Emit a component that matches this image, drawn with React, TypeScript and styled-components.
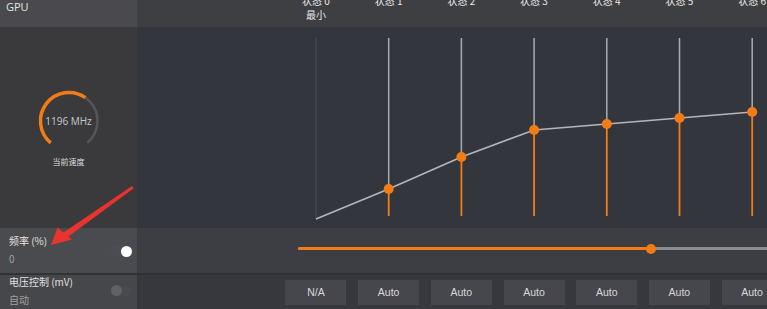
import React from "react";
import styled, { createGlobalStyle } from "styled-components";

const Global = createGlobalStyle`
  html, body { margin: 0; padding: 0; background: #2f3034; }
  body { font-family: "Noto Sans CJK SC", "Noto Sans", sans-serif; overflow: hidden; }
`;

const COL = 72.7;
const ORANGE = "#f57c14";

const Page = styled.div`
  position: relative;
  width: 767px;
  height: 309px;
  display: grid;
  grid-template-columns: 137px minmax(0, 1fr);
  grid-template-rows: 27px 201px 45px 2px 34px;
  overflow: hidden;
  background: #2c2d30;
`;

const LeftHead = styled.div`
  background: #4a4a4e;
  color: #e4e4e4;
  font-family: "Open Sans", "Noto Sans", sans-serif;
  font-size: 11px;
  padding: 0 6px;
  line-height: 14px;
`;

const RightHead = styled.div`
  background: #3e3f43;
  display: grid;
  grid-template-columns: repeat(7, ${COL}px);
  padding-left: 142.6px;
  overflow: hidden;
`;

const StateLabel = styled.div`
  text-align: center;
  color: #e8e8e8;
  font-size: 10px;
  line-height: 14px;
  margin-top: -6px;
  white-space: nowrap;
`;

const LeftBody = styled.div`
  background: #3a3a3d;
  display: flex;
  flex-direction: column;
  align-items: center;
  padding-top: 59px;
`;

const GaugeBox = styled.div`
  position: relative;
  width: 70px;
  height: 70px;
  display: flex;
  align-items: center;
  justify-content: center;
`;

const GaugeSvg = styled.svg`
  position: absolute;
  inset: 0;
`;

const GaugeText = styled.span`
  position: relative;
  color: #c8c8c8;
  font-family: "Open Sans", "Noto Sans", sans-serif;
  font-size: 10px;
`;

const Caption = styled.div`
  color: #dcdcdc;
  font-size: 8px;
`;

const Chart = styled.div`
  background: #33373d;
  overflow: hidden;
`;

const ChartSvg = styled.svg`
  display: block;
`;

const RowLeft = styled.div<{ $tone: string; $shift: number }>`
  background: ${(p) => p.$tone};
  display: flex;
  align-items: center;
  justify-content: space-between;
  padding: 0 9px;
  padding-bottom: ${(p) => p.$shift}px;
`;

const RowText = styled.div`
  display: flex;
  flex-direction: column;
  gap: 4px;
`;

const RowTitle = styled.span`
  color: #e0e0e0;
  font-size: 10px;
  line-height: 14px;
`;

const RowValue = styled.span`
  color: #a0a0a0;
  font-size: 10px;
  line-height: 13px;
`;

const Toggle = styled.div<{ $on: boolean }>`
  position: relative;
  width: 20px;
  height: 10px;
  border-radius: 5px;
  background: ${(p) => (p.$on ? "#4c4d52" : "#4a4b4f")};
  margin-right: -3px;
  margin-top: ${(p) => (p.$on ? "3px" : "0")};
  &::after {
    content: "";
    position: absolute;
    top: -0.5px;
    ${(p) => (p.$on ? "right: -1px;" : "left: 0;")}
    width: 11px;
    height: 11px;
    border-radius: 50%;
    background: ${(p) => (p.$on ? "#ffffff" : "#606165")};
  }
`;

const SliderRow = styled.div`
  background: #3c3e43;
  display: flex;
  align-items: center;
  padding-left: 161px;
  padding-bottom: 4px;
`;

const Track = styled.div`
  position: relative;
  flex: 1;
  height: 3px;
  background: #8a8b8e;
  border-radius: 2px 0 0 2px;
`;

const Fill = styled.div`
  position: absolute;
  left: 0;
  top: 0;
  bottom: 0;
  background: ${ORANGE};
  border-radius: 2px;
`;

const Thumb = styled.div`
  position: absolute;
  top: 50%;
  width: 10px;
  height: 10px;
  margin: -5px 0 0 -5px;
  border-radius: 50%;
  background: ${ORANGE};
`;

const Divider = styled.div<{ $tone: string }>`
  background: ${(p) => p.$tone};
`;

const ButtonRow = styled.div`
  background: #36383d;
  display: grid;
  grid-template-columns: repeat(7, ${COL}px);
  padding-left: 142.6px;
  align-items: center;
  overflow: hidden;
`;

const StateBtn = styled.div`
  width: 61px;
  height: 25px;
  justify-self: center;
  background: #45474c;
  color: #d8d8d8;
  font-family: "Liberation Sans", Arial, sans-serif;
  font-size: 10.5px;
  display: flex;
  align-items: center;
  justify-content: center;
`;

const Arrow = styled.svg`
  position: absolute;
  left: 0;
  top: 0;
  pointer-events: none;
`;

const xs = [0, 1, 2, 3, 4, 5, 6].map((i) => 179 + i * COL);
const ys = [192, 162, 130, 103, 97, 91, 85];

function arc(cx: number, cy: number, r: number, a0: number, a1: number) {
  const p = (a: number) => {
    const rad = ((a - 90) * Math.PI) / 180;
    return [cx + r * Math.cos(rad), cy + r * Math.sin(rad)];
  };
  const [x0, y0] = p(a0);
  const [x1, y1] = p(a1);
  const large = a1 - a0 > 180 ? 1 : 0;
  return `M${x0.toFixed(2)} ${y0.toFixed(2)} A${r} ${r} 0 ${large} 1 ${x1.toFixed(2)} ${y1.toFixed(2)}`;
}

export default function App() {
  const labels = ["状态 0", "状态 1", "状态 2", "状态 3", "状态 4", "状态 5", "状态 6"];
  const buttons = ["N/A", "Auto", "Auto", "Auto", "Auto", "Auto", "Auto"];
  const linePts = xs.map((x, i) => `${x.toFixed(1)},${ys[i]}`).join(" ");
  return (
    <>
      <Global />
      <Page>
        <LeftHead>GPU</LeftHead>
        <RightHead>
          {labels.map((l, i) => (
            <StateLabel key={i}>
              {l}
              {i === 0 && (
                <>
                  <br />
                  最小
                </>
              )}
            </StateLabel>
          ))}
        </RightHead>

        <LeftBody>
          <GaugeBox>
            <GaugeSvg width="70" height="70" viewBox="0 0 70 70">
              <path d={arc(35, 35, 28.5, -140, 140)} stroke="#55565a" strokeWidth="2.5" fill="none" />
              <path d={arc(35, 35, 28.5, -140, 35)} stroke={ORANGE} strokeWidth="3.5" fill="none" />
            </GaugeSvg>
            <GaugeText>1196 MHz</GaugeText>
          </GaugeBox>
          <Caption>当前速度</Caption>
        </LeftBody>

        <Chart>
          <ChartSvg width="630" height="201" viewBox="0 0 630 201">
            <line x1={xs[0]} y1={11} x2={xs[0]} y2={192} stroke="#4a4d53" strokeWidth="1" />
            {xs.slice(1).map((x, i) => (
              <g key={i}>
                <line x1={x} y1={11} x2={x} y2={ys[i + 1]} stroke="#a9abaf" strokeWidth="1.5" />
                <line x1={x} y1={ys[i + 1]} x2={x} y2={189} stroke={ORANGE} strokeWidth="1.8" />
              </g>
            ))}
            <polyline points={linePts} stroke="#b5b6b9" strokeWidth="1.6" fill="none" />
            {xs.slice(1).map((x, i) => (
              <circle key={i} cx={x} cy={ys[i + 1]} r="5" fill={ORANGE} />
            ))}
          </ChartSvg>
        </Chart>

        <RowLeft $tone="#4a4b4f" $shift={2}>
          <RowText>
            <RowTitle>频率 (%)</RowTitle>
            <RowValue>0</RowValue>
          </RowText>
          <Toggle $on />
        </RowLeft>
        <SliderRow>
          <Track>
            <Fill style={{ width: "75.3%" }} />
            <Thumb style={{ left: "75.3%" }} />
          </Track>
        </SliderRow>

        <Divider $tone="#333336" />
        <Divider $tone="#2e3034" />

        <RowLeft $tone="#46474b" $shift={3}>
          <RowText>
            <RowTitle>电压控制 (mV)</RowTitle>
            <RowValue>自动</RowValue>
          </RowText>
          <Toggle $on={false} />
        </RowLeft>
        <ButtonRow>
          {buttons.map((b, i) => (
            <StateBtn key={i}>{b}</StateBtn>
          ))}
        </ButtonRow>

        <Arrow width="767" height="309" viewBox="0 0 767 309">
          <polygon points="132,186 133.5,188.5 67,237.5 63.5,232.5" fill="#e8332f" />
          <polygon points="51,245 57.5,227.5 72,239.5" fill="#e8332f" />
        </Arrow>
      </Page>
    </>
  );
}
